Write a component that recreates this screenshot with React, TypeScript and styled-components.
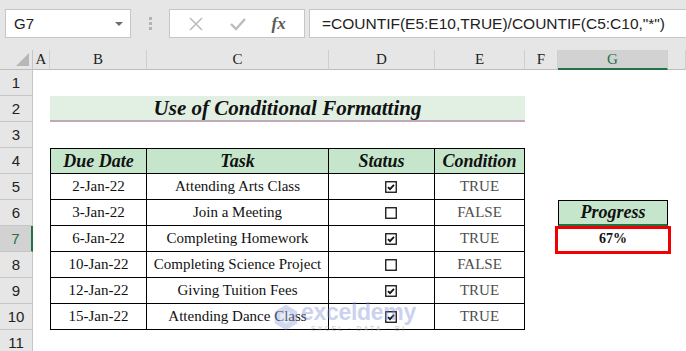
import React from "react";
import styled, { createGlobalStyle, css } from "styled-components";

const GlobalStyle = createGlobalStyle`
  html, body {
    margin: 0;
    padding: 0;
    background: #ffffff;
    overflow: hidden;
  }
`;

const serif = `"Liberation Serif", "Times New Roman", serif`;
const sans = `"Liberation Sans", Arial, sans-serif`;
const excelGreen = "#217346";

const Screen = styled.div`
  position: relative;
  width: 686px;
  height: 351px;
  overflow: hidden;
  background: #ffffff;
`;

/* formula bar */
const FormulaBar = styled.div`
  display: flex;
  align-items: flex-start;
  height: 50px;
  padding: 9px 0 0 5px;
  box-sizing: border-box;
  background: #e6e6e6;
`;

const NameBox = styled.div`
  display: flex;
  align-items: center;
  justify-content: space-between;
  width: 126px;
  height: 29px;
  box-sizing: border-box;
  padding: 0 7px 0 8px;
  background: #fff;
  border: 1px solid #c6c6c6;
  font-family: ${sans};
  font-size: 15px;
  color: #222;
`;

const DropArrow = styled.span`
  width: 0;
  height: 0;
  border-left: 4px solid transparent;
  border-right: 4px solid transparent;
  border-top: 4px solid #6d6d6d;
`;

const Grip = styled.div`
  width: 38px;
  height: 29px;
  display: flex;
  flex-direction: column;
  align-items: center;
  justify-content: center;
  gap: 2px;

  span {
    width: 3px;
    height: 3px;
    background: #b3b3b3;
  }
`;

const FxBox = styled.div`
  display: flex;
  align-items: center;
  justify-content: space-around;
  width: 136px;
  height: 29px;
  box-sizing: border-box;
  padding: 0 6px;
  background: #fff;
  border: 1px solid #c6c6c6;
`;

const FxLabel = styled.span`
  font-family: ${serif};
  font-style: italic;
  font-weight: bold;
  font-size: 17px;
  color: #5a5a5a;
`;

const FormulaInput = styled.div`
  flex: 1;
  height: 29px;
  margin-left: 4px;
  box-sizing: border-box;
  display: flex;
  align-items: center;
  padding-left: 12px;
  background: #fff;
  border: 1px solid #c6c6c6;
  border-right: none;
  font-family: ${sans};
  font-size: 15.5px;
  color: #222;
  white-space: nowrap;
`;

/* sheet grid */
const Sheet = styled.div`
  display: grid;
  grid-template-columns: 33px 17px 97px 182px 106px 90px 33px 110px 1fr;
  grid-template-rows: 20px repeat(11, 26px);
`;

const Corner = styled.div`
  position: relative;
  background: #e6e6e6;
  border-right: 1px solid #c6c6c6;
  border-bottom: 1px solid #bdbdbd;

  &::after {
    content: "";
    position: absolute;
    right: 3px;
    bottom: 3px;
    border-left: 13px solid transparent;
    border-bottom: 13px solid #b7b7b7;
  }
`;

const ColHead = styled.div<{ $active?: boolean }>`
  display: flex;
  align-items: center;
  justify-content: center;
  background: ${(p) => (p.$active ? "#d2d2d2" : "#e6e6e6")};
  border-right: 1px solid #cfcfcf;
  border-bottom: ${(p) => (p.$active ? `2px solid ${excelGreen}` : "1px solid #bdbdbd")};
  box-sizing: border-box;
  font-family: ${serif};
  font-size: 15px;
  color: ${(p) => (p.$active ? excelGreen : "#222")};
`;

const RowHead = styled.div<{ $active?: boolean }>`
  display: flex;
  align-items: center;
  justify-content: center;
  box-sizing: border-box;
  background: ${(p) => (p.$active ? "#d2d2d2" : "#e6e6e6")};
  border-right: ${(p) => (p.$active ? `2px solid ${excelGreen}` : "1px solid #c6c6c6")};
  border-bottom: 1px solid #c6c6c6;
  font-family: ${sans};
  font-size: 15px;
  color: ${(p) => (p.$active ? excelGreen : "#222")};
`;

const Blank = styled.div``;

const Title = styled.div`
  grid-column: span 4;
  display: flex;
  align-items: center;
  justify-content: center;
  background: #e2f0e4;
  border-bottom: 2px solid #c2a8b9;
  font-family: ${serif};
  font-style: italic;
  font-weight: bold;
  font-size: 21px;
  color: #111;
`;

const Cell = styled.div<{
  $head?: boolean;
  $first?: boolean;
  $top?: boolean;
  $muted?: boolean;
}>`
  display: flex;
  align-items: center;
  justify-content: center;
  box-sizing: border-box;
  border-right: 1px solid #000;
  border-bottom: 1px solid #000;
  ${(p) => p.$first && css`border-left: 1px solid #000;`}
  ${(p) => p.$top && css`border-top: 1px solid #000;`}
  background: ${(p) => (p.$head ? "#c6e6cc" : "#fff")};
  font-family: ${serif};
  font-size: ${(p) => (p.$head ? "18px" : "15px")};
  font-weight: ${(p) => (p.$head ? "bold" : "normal")};
  font-style: ${(p) => (p.$head ? "italic" : "normal")};
  color: ${(p) => (p.$muted ? "#4d4d4d" : "#111")};
  white-space: nowrap;
`;

const CheckCell = styled(Cell)`
  justify-content: flex-start;
  padding-left: 56px;
`;

const ProgressHead = styled.div`
  display: flex;
  align-items: center;
  justify-content: center;
  box-sizing: border-box;
  background: #c6e6cc;
  border: 1px solid #000;
  border-bottom: 2px solid ${excelGreen};
  font-family: ${serif};
  font-style: italic;
  font-weight: bold;
  font-size: 18px;
  color: #111;
`;

const ProgressValue = styled.div`
  position: relative;
  display: flex;
  align-items: center;
  justify-content: center;
  font-family: ${serif};
  font-weight: bold;
  font-size: 14px;
  color: #111;

  &::after {
    content: "";
    position: absolute;
    inset: 0 -3px -2px -3px;
    border: 3px solid #f00000;
  }
`;

/* watermark */
const Watermark = styled.div`
  position: absolute;
  left: 272px;
  top: 301px;
  display: flex;
  align-items: center;
  gap: 1px;
  opacity: 0.4;
  pointer-events: none;
`;

const WatermarkText = styled.div`
  display: flex;
  flex-direction: column;
  align-items: center;
  line-height: 1;
`;

const WatermarkWord = styled.span`
  font-family: ${sans};
  font-weight: bold;
  font-size: 23px;
  color: #7f8fd6;
  letter-spacing: -0.3px;
`;

const WatermarkTag = styled.span`
  font-family: ${sans};
  font-weight: bold;
  font-size: 7px;
  letter-spacing: 2px;
  color: #a0a0a0;
  margin-top: 1px;
`;

const CheckBox = ({ checked }: { checked: boolean }) => (
  <svg width="12" height="12" viewBox="0 0 12 12">
    <rect x="0.75" y="0.75" width="10.5" height="10.5" fill="#fff" stroke="#111" strokeWidth="1.3" />
    {checked && (
      <path d="M3 6.2 L5 8.2 L9 3.8" fill="none" stroke="#111" strokeWidth="1.8" />
    )}
  </svg>
);

const rows = [
  { date: "2-Jan-22", task: "Attending Arts Class", done: true },
  { date: "3-Jan-22", task: "Join a Meeting", done: false },
  { date: "6-Jan-22", task: "Completing Homework", done: true },
  { date: "10-Jan-22", task: "Completing Science Project", done: false },
  { date: "12-Jan-22", task: "Giving Tuition Fees", done: true },
  { date: "15-Jan-22", task: "Attending Dance Class", done: true },
];

const columns = ["A", "B", "C", "D", "E", "F", "G"];

export default function App() {
  return (
    <Screen>
      <GlobalStyle />
      <FormulaBar>
        <NameBox>
          G7
          <DropArrow />
        </NameBox>
        <Grip>
          <span />
          <span />
          <span />
        </Grip>
        <FxBox>
          <svg width="16" height="16" viewBox="0 0 16 16">
            <path d="M2 2 L14 14 M14 2 L2 14" stroke="#bcbcbc" strokeWidth="1.6" />
          </svg>
          <svg width="18" height="16" viewBox="0 0 18 16">
            <path d="M2 8 L7 13 L16 3" fill="none" stroke="#bcbcbc" strokeWidth="2.4" />
          </svg>
          <FxLabel>fx</FxLabel>
        </FxBox>
        <FormulaInput>=COUNTIF(E5:E10,TRUE)/COUNTIF(C5:C10,"*")</FormulaInput>
      </FormulaBar>

      <Sheet>
        <Corner />
        {columns.map((c) => (
          <ColHead key={c} $active={c === "G"}>
            {c}
          </ColHead>
        ))}
        <ColHead />

        {/* row 1 */}
        <RowHead>1</RowHead>
        {Array.from({ length: 8 }).map((_, i) => (
          <Blank key={i} />
        ))}

        {/* row 2 */}
        <RowHead>2</RowHead>
        <Blank />
        <Title>Use of Conditional Formatting</Title>
        <Blank />
        <Blank />
        <Blank />

        {/* row 3 */}
        <RowHead>3</RowHead>
        {Array.from({ length: 8 }).map((_, i) => (
          <Blank key={i} />
        ))}

        {/* row 4 */}
        <RowHead>4</RowHead>
        <Blank />
        <Cell $head $top $first>Due Date</Cell>
        <Cell $head $top>Task</Cell>
        <Cell $head $top>Status</Cell>
        <Cell $head $top>Condition</Cell>
        <Blank />
        <Blank />
        <Blank />

        {rows.map((r, i) => {
          const n = i + 5;
          return (
            <React.Fragment key={n}>
              <RowHead $active={n === 7}>{n}</RowHead>
              <Blank />
              <Cell $first>{r.date}</Cell>
              <Cell>{r.task}</Cell>
              <CheckCell>
                <CheckBox checked={r.done} />
              </CheckCell>
              <Cell $muted>{r.done ? "TRUE" : "FALSE"}</Cell>
              <Blank />
              {n === 6 ? (
                <ProgressHead>Progress</ProgressHead>
              ) : n === 7 ? (
                <ProgressValue>67%</ProgressValue>
              ) : (
                <Blank />
              )}
              <Blank />
            </React.Fragment>
          );
        })}

        {/* row 11 */}
        <RowHead>11</RowHead>
        {Array.from({ length: 8 }).map((_, i) => (
          <Blank key={i} />
        ))}
      </Sheet>

      <Watermark>
        <svg width="28" height="28" viewBox="0 0 30 30">
          <path d="M15 2 L27 9 L27 22 L15 29 L3 22 L3 9 Z" fill="#8fa0dd" />
          <path d="M15 8 L21 11.5 L21 19 L15 22.5 L9 19 L9 11.5 Z" fill="#c4cdf0" />
        </svg>
        <WatermarkText>
          <WatermarkWord>exceldemy</WatermarkWord>
          <WatermarkTag>EXCEL · DATA · BI</WatermarkTag>
        </WatermarkText>
      </Watermark>
    </Screen>
  );
}
